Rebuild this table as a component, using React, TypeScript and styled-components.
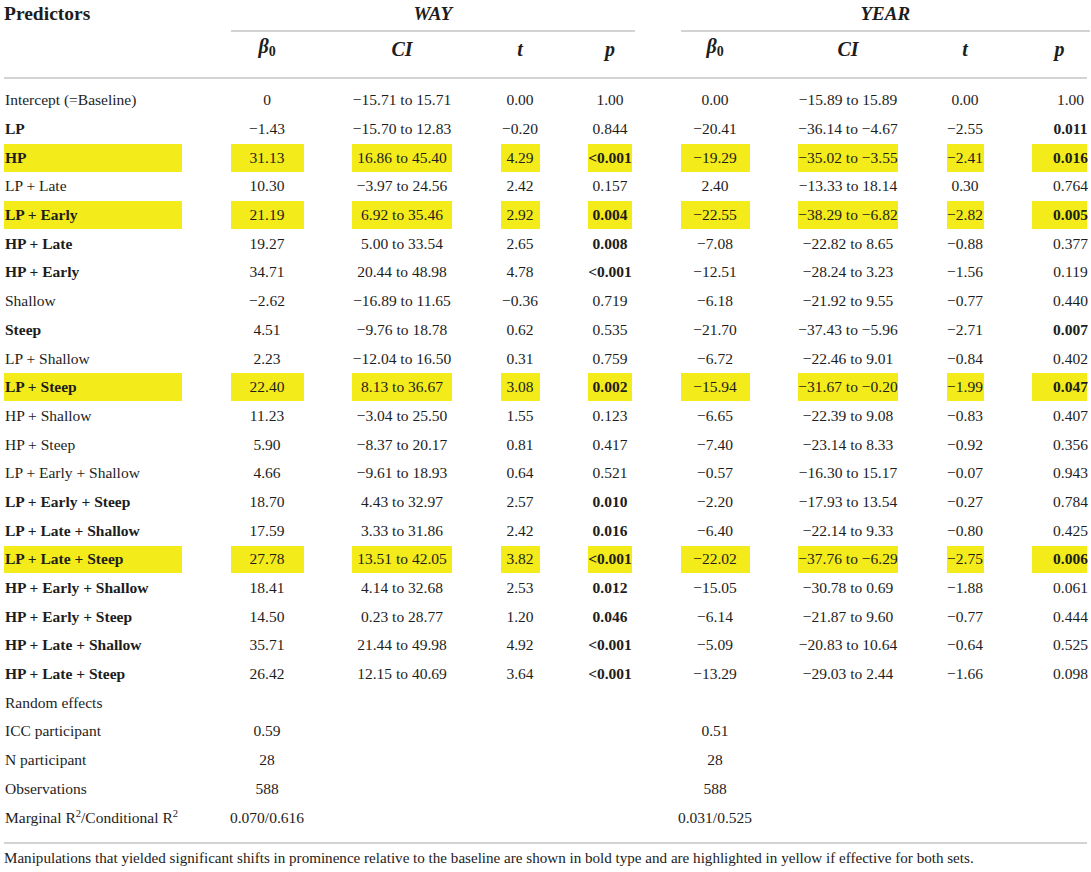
import React from "react";
import styled, { createGlobalStyle } from "styled-components";

const COLS = "178px 73px 100px 39px 44px 69px 100px 37px 55px";
const GAP = "48.5px";
const RULE = "#d3d3d3";
const HL = "#f4eb1b";

const Global = createGlobalStyle`
  html, body { margin: 0; padding: 0; background: #fff; }
  body {
    font-family: "Liberation Serif", "DejaVu Serif", serif;
    color: #1d1d1d;
    overflow: hidden;
  }
`;

const Page = styled.div`
  width: 1083px;
  padding: 0 0 0 4px;
`;

const HeaderTop = styled.div`
  display: grid;
  grid-template-columns: ${COLS};
  column-gap: ${GAP};
  align-items: start;
`;

const PredHead = styled.div`
  font-size: 19.5px;
  font-weight: 700;
  line-height: 24px;
  padding-top: 2px;
`;

const GroupTitle = styled.div<{ $span: string }>`
  grid-column: ${(p) => p.$span};
  text-align: center;
  font-size: 19px;
  font-weight: 700;
  font-style: italic;
  line-height: 24px;
  padding-top: 2px;
  padding-bottom: 4px;
  border-bottom: 2px solid ${RULE};
  margin-right: -3px;
`;

const HeaderSub = styled.div`
  display: grid;
  grid-template-columns: ${COLS};
  column-gap: ${GAP};
  height: 45px;
  box-sizing: border-box;
  padding-bottom: 11px;
  align-items: center;
`;

const SubHead = styled.div`
  text-align: center;
  font-size: 20px;
  font-weight: 700;
  font-style: italic;
  line-height: 24px;
  sub {
    font-style: normal;
    font-size: 14px;
    vertical-align: -3px;
  }
`;

const Rule = styled.div<{ $gap?: number }>`
  height: 2px;
  background: ${RULE};
  margin-top: ${(p) => p.$gap ?? 0}px;
`;

const Body = styled.div`
  display: flex;
  flex-direction: column;
  gap: 1px;
  margin-top: 7.5px;
`;

const Row = styled.div`
  display: grid;
  grid-template-columns: ${COLS};
  column-gap: ${GAP};
  height: 27.7px;
`;

const Cell = styled.div<{ $hl?: boolean; $bold?: boolean; $label?: boolean; $last?: boolean }>`
  display: flex;
  align-items: center;
  justify-content: ${(p) => (p.$label ? "flex-start" : "center")};
  padding-left: ${(p) => (p.$label ? "1px" : p.$last ? "22px" : "0")};
  background: ${(p) => (p.$hl ? HL : "transparent")};
  font-size: 15.5px;
  font-weight: ${(p) => (p.$bold ? 700 : 400)};
  white-space: nowrap;
`;

const LabelText = styled.span`
  line-height: 20px;
  sup {
    font-size: 10.5px;
    vertical-align: 6px;
    line-height: 0;
  }
`;

const Footnote = styled.p`
  margin: 5px 0 0;
  font-size: 15.1px;
  line-height: 18px;
  color: #222;
  white-space: nowrap;
`;

type DataRow = {
  label: React.ReactNode;
  bold?: boolean;
  hl?: boolean;
  v: string[];
  bp?: [boolean, boolean];
};

const M = "\u2212";

const rows: DataRow[] = [
  { label: "Intercept (=Baseline)", v: ["0", `${M}15.71 to 15.71`, "0.00", "1.00", "0.00", `${M}15.89 to 15.89`, "0.00", "1.00"] },
  { label: "LP", bold: true, v: [`${M}1.43`, `${M}15.70 to 12.83`, `${M}0.20`, "0.844", `${M}20.41`, `${M}36.14 to ${M}4.67`, `${M}2.55`, "0.011"], bp: [false, true] },
  { label: "HP", bold: true, hl: true, v: ["31.13", "16.86 to 45.40", "4.29", "<0.001", `${M}19.29`, `${M}35.02 to ${M}3.55`, `${M}2.41`, "0.016"], bp: [true, true] },
  { label: "LP + Late", v: ["10.30", `${M}3.97 to 24.56`, "2.42", "0.157", "2.40", `${M}13.33 to 18.14`, "0.30", "0.764"] },
  { label: "LP + Early", bold: true, hl: true, v: ["21.19", "6.92 to 35.46", "2.92", "0.004", `${M}22.55`, `${M}38.29 to ${M}6.82`, `${M}2.82`, "0.005"], bp: [true, true] },
  { label: "HP + Late", bold: true, v: ["19.27", "5.00 to 33.54", "2.65", "0.008", `${M}7.08`, `${M}22.82 to 8.65`, `${M}0.88`, "0.377"], bp: [true, false] },
  { label: "HP + Early", bold: true, v: ["34.71", "20.44 to 48.98", "4.78", "<0.001", `${M}12.51`, `${M}28.24 to 3.23`, `${M}1.56`, "0.119"], bp: [true, false] },
  { label: "Shallow", v: [`${M}2.62`, `${M}16.89 to 11.65`, `${M}0.36`, "0.719", `${M}6.18`, `${M}21.92 to 9.55`, `${M}0.77`, "0.440"] },
  { label: "Steep", bold: true, v: ["4.51", `${M}9.76 to 18.78`, "0.62", "0.535", `${M}21.70`, `${M}37.43 to ${M}5.96`, `${M}2.71`, "0.007"], bp: [false, true] },
  { label: "LP + Shallow", v: ["2.23", `${M}12.04 to 16.50`, "0.31", "0.759", `${M}6.72`, `${M}22.46 to 9.01`, `${M}0.84`, "0.402"] },
  { label: "LP + Steep", bold: true, hl: true, v: ["22.40", "8.13 to 36.67", "3.08", "0.002", `${M}15.94`, `${M}31.67 to ${M}0.20`, `${M}1.99`, "0.047"], bp: [true, true] },
  { label: "HP + Shallow", v: ["11.23", `${M}3.04 to 25.50`, "1.55", "0.123", `${M}6.65`, `${M}22.39 to 9.08`, `${M}0.83`, "0.407"] },
  { label: "HP + Steep", v: ["5.90", `${M}8.37 to 20.17`, "0.81", "0.417", `${M}7.40`, `${M}23.14 to 8.33`, `${M}0.92`, "0.356"] },
  { label: "LP + Early + Shallow", v: ["4.66", `${M}9.61 to 18.93`, "0.64", "0.521", `${M}0.57`, `${M}16.30 to 15.17`, `${M}0.07`, "0.943"] },
  { label: "LP + Early + Steep", bold: true, v: ["18.70", "4.43 to 32.97", "2.57", "0.010", `${M}2.20`, `${M}17.93 to 13.54`, `${M}0.27`, "0.784"], bp: [true, false] },
  { label: "LP + Late + Shallow", bold: true, v: ["17.59", "3.33 to 31.86", "2.42", "0.016", `${M}6.40`, `${M}22.14 to 9.33`, `${M}0.80`, "0.425"], bp: [true, false] },
  { label: "LP + Late + Steep", bold: true, hl: true, v: ["27.78", "13.51 to 42.05", "3.82", "<0.001", `${M}22.02`, `${M}37.76 to ${M}6.29`, `${M}2.75`, "0.006"], bp: [true, true] },
  { label: "HP + Early + Shallow", bold: true, v: ["18.41", "4.14 to 32.68", "2.53", "0.012", `${M}15.05`, `${M}30.78 to 0.69`, `${M}1.88`, "0.061"], bp: [true, false] },
  { label: "HP + Early + Steep", bold: true, v: ["14.50", "0.23 to 28.77", "1.20", "0.046", `${M}6.14`, `${M}21.87 to 9.60`, `${M}0.77`, "0.444"], bp: [true, false] },
  { label: "HP + Late + Shallow", bold: true, v: ["35.71", "21.44 to 49.98", "4.92", "<0.001", `${M}5.09`, `${M}20.83 to 10.64`, `${M}0.64`, "0.525"], bp: [true, false] },
  { label: "HP + Late + Steep", bold: true, v: ["26.42", "12.15 to 40.69", "3.64", "<0.001", `${M}13.29`, `${M}29.03 to 2.44`, `${M}1.66`, "0.098"], bp: [true, false] },
  { label: "Random effects", v: ["", "", "", "", "", "", "", ""] },
  { label: "ICC participant", v: ["0.59", "", "", "", "0.51", "", "", ""] },
  { label: "N participant", v: ["28", "", "", "", "28", "", "", ""] },
  { label: "Observations", v: ["588", "", "", "", "588", "", "", ""] },
  {
    label: (
      <>
        Marginal R<sup>2</sup>/Conditional R<sup>2</sup>
      </>
    ),
    v: ["0.070/0.616", "", "", "", "0.031/0.525", "", "", ""],
  },
];

const Beta = () => (
  <>
    β<sub>0</sub>
  </>
);

const subHeads: React.ReactNode[] = [<Beta />, "CI", "t", "p", <Beta />, "CI", "t", "p"];

export default function App() {
  return (
    <Page>
      <Global />
      <HeaderTop>
        <PredHead>Predictors</PredHead>
        <GroupTitle $span="2 / 6">WAY</GroupTitle>
        <GroupTitle $span="6 / 10">YEAR</GroupTitle>
      </HeaderTop>
      <HeaderSub>
        <div />
        {subHeads.map((h, i) => (
          <SubHead key={i}>{h}</SubHead>
        ))}
      </HeaderSub>
      <Rule />
      <Body>
        {rows.map((r, i) => (
          <Row key={i}>
            <Cell $label $bold={r.bold} $hl={r.hl}>
              <LabelText>{r.label}</LabelText>
            </Cell>
            {r.v.map((val, j) => (
              <Cell
                key={j}
                $hl={r.hl}
                $last={j === 7}
                $bold={(j === 3 && r.bp?.[0]) || (j === 7 && r.bp?.[1])}
              >
                {val}
              </Cell>
            ))}
          </Row>
        ))}
      </Body>
      <Rule $gap={10.5} />
      <Footnote>
        Manipulations that yielded significant shifts in prominence relative to the baseline are shown in bold type and are highlighted in yellow if effective for both sets.
      </Footnote>
    </Page>
  );
}
